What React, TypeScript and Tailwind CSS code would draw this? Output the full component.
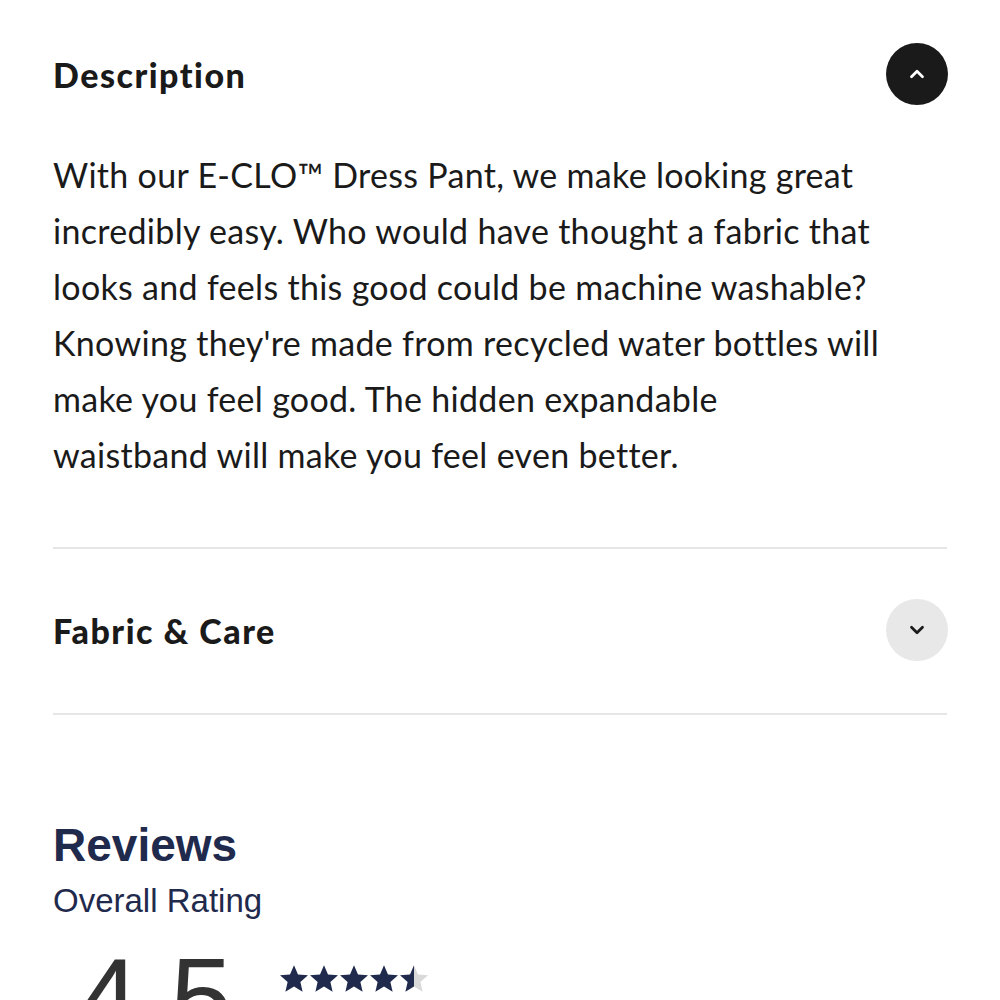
import { ChevronDown, ChevronUp } from "lucide-react";

const body = { fontFamily: "Lato, 'Noto Sans', sans-serif" };
const arial = { fontFamily: "'Liberation Sans', Arial, sans-serif" };

function Star({ fill = 1 }: { fill?: number }) {
  const id = `half-${fill}`;
  return (
    <svg width="30" height="29" viewBox="0 0 24 23">
      <defs>
        <linearGradient id={id}>
          <stop offset={`${fill * 100}%`} stopColor="#1f2a4d" />
          <stop offset={`${fill * 100}%`} stopColor="#d9d9d9" />
        </linearGradient>
      </defs>
      <path
        d="M12 0.8l3.2 7.4 8 0.7-6.1 5.3 1.8 7.9L12 17.9l-6.9 4.2 1.8-7.9L0.8 8.9l8-0.7z"
        fill={`url(#${id})`}
      />
    </svg>
  );
}

export default function App() {
  return (
    <div className="min-h-screen bg-white px-[53px] pt-[43px] overflow-hidden h-[1000px]">
      {/* Description */}
      <div className="flex items-center justify-between">
        <h2 className="text-[34px] font-black tracking-[1.5px] text-[#1a1a1a]" style={body}>
          Description
        </h2>
        <button className="w-[62px] h-[62px] rounded-full bg-[#1a1a1a] text-white flex items-center justify-center mr-[-1px]">
          <ChevronUp size={22} strokeWidth={3} />
        </button>
      </div>
      <p
        className="mt-[42px] text-[34px] leading-[56px] tracking-[0.3px] text-[#1a1a1a] whitespace-nowrap"
        style={body}
      >
        With our E-CLO™ Dress Pant, we make looking great
        <br />
        incredibly easy. Who would have thought a fabric that
        <br />
        looks and feels this good could be machine washable?
        <br />
        Knowing they're made from recycled water bottles will
        <br />
        make you feel good. The hidden expandable
        <br />
        waistband will make you feel even better.
      </p>

      <div className="mt-[64px] h-[2px] bg-[#e6e6e6]" />

      {/* Fabric & Care */}
      <div className="flex items-center justify-between pt-[50px] pb-[52px]">
        <h2 className="text-[34px] font-black tracking-[1.5px] text-[#1a1a1a]" style={body}>
          Fabric &amp; Care
        </h2>
        <button className="w-[62px] h-[62px] rounded-full bg-[#e8e8e8] text-[#1a1a1a] flex items-center justify-center mr-[-1px]">
          <ChevronDown size={22} strokeWidth={3} />
        </button>
      </div>
      <div className="h-[2px] bg-[#e6e6e6]" />

      {/* Reviews */}
      <div className="pt-[104px]" style={arial}>
        <h2 className="text-[46px] leading-[52px] font-bold text-[#1f2a4d]">Reviews</h2>
        <p className="mt-[10px] text-[33px] leading-[40px] text-[#1f2a4d]">Overall Rating</p>
        <div className="flex items-start mt-[27px]">
          <span className="ml-[24px] text-[112px] leading-[100px] text-[#333333]">4.5</span>
          <div className="flex ml-[46px] mt-[16px]">
            <Star />
            <Star />
            <Star />
            <Star />
            <Star fill={0.5} />
          </div>
        </div>
      </div>
    </div>
  );
}
